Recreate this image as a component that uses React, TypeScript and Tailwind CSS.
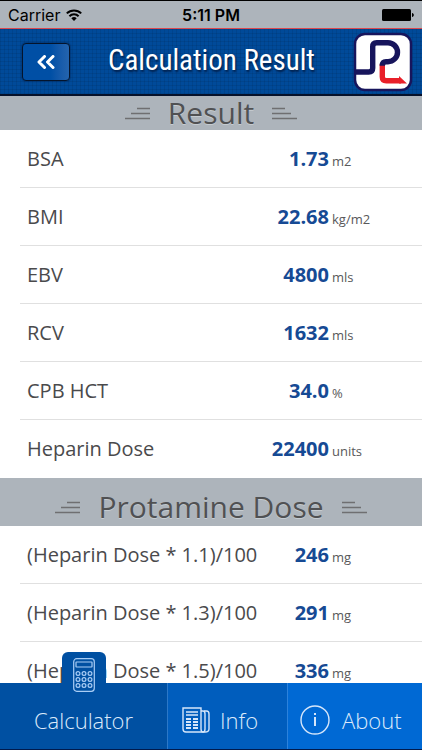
import React, { useState } from 'react';

interface ResultItem {
  label: string;
  value: string;
  unit: string;
}

type TabId = 'calculator' | 'info' | 'about';

const results: ResultItem[] = [
  { label: 'BSA', value: '1.73', unit: 'm2' },
  { label: 'BMI', value: '22.68', unit: 'kg/m2' },
  { label: 'EBV', value: '4800', unit: 'mls' },
  { label: 'RCV', value: '1632', unit: 'mls' },
  { label: 'CPB HCT', value: '34.0', unit: '%' },
  { label: 'Heparin Dose', value: '22400', unit: 'units' },
];

const protamineDoses: ResultItem[] = [
  { label: '(Heparin Dose * 1.1)/100', value: '246', unit: 'mg' },
  { label: '(Heparin Dose * 1.3)/100', value: '291', unit: 'mg' },
  { label: '(Heparin Dose * 1.5)/100', value: '336', unit: 'mg' },
];

const StatusBar = () => (
  <div className="grid grid-cols-3 items-center h-7 px-2 border-t border-black bg-[#adb4bb] text-black text-[16px] leading-6 font-['Inter',sans-serif]">
    <div className="flex items-center gap-1.5">
      <span>Carrier</span>
      <svg viewBox="0 0 16 12" className="w-4 h-3" fill="none" stroke="black" strokeWidth="2">
        <path d="M0.8 4.4a10.2 10.2 0 0 1 14.4 0" />
        <path d="M3.4 7.2a6.5 6.5 0 0 1 9.2 0" />
        <path d="M8 12L5.3 9.3a3.8 3.8 0 0 1 5.4 0z" fill="black" stroke="none" />
      </svg>
    </div>
    <span className="text-center font-semibold whitespace-nowrap">5:11 PM</span>
    <svg viewBox="0 0 32 12" className="w-8 h-3 justify-self-end">
      <rect width="29" height="12" rx="1.5" fill="black" />
      <path d="M30 4c1.2.3 1.8 1 1.8 2s-.6 1.7-1.8 2z" fill="black" />
    </svg>
  </div>
);

const Logo = () => (
  <svg viewBox="0 0 60 60" className="w-[60px] h-[60px]" fill="none">
    <rect x="2" y="2" width="56" height="56" rx="10" fill="white" stroke="#17155c" strokeWidth="2.5" />
    <path d="M29.3 32V44.7q0 4 4 4H48" stroke="#e8202a" strokeWidth="5.4" />
    <path d="M46 44L54 51.4H46z" fill="#e8202a" />
    <path
      d="M2 40H15.7q4 0 4-4V14.7q0-4 4-4H35a9.5 9.5 0 0 1 0 19H33q-3.7 0-3.7 4"
      stroke="#17155c"
      strokeWidth="5.4"
    />
  </svg>
);

const Header = () => (
  <header className="flex items-center justify-between h-[68px] pl-[22px] pr-[9px] border-t border-t-[#d9474f] border-b-2 border-b-[#06122b] bg-[#004a99] bg-[linear-gradient(#00000014_1px,transparent_1px),linear-gradient(90deg,#00000014_1px,transparent_1px)] bg-[size:4px_4px]">
    <button
      type="button"
      aria-label="Back"
      className="flex items-center justify-center w-12 h-[38px] rounded-sm border border-[#04142c] bg-linear-to-r from-[#004fa5] from-60% to-[#2464ae] shadow-[0_0_2px_#001a40]"
    >
      <svg viewBox="0 0 18 14" className="w-[18px] h-[14px]" fill="none" stroke="white" strokeWidth="3" strokeLinecap="round" strokeLinejoin="round">
        <path d="M7.5 1.5L2 7l5.5 5.5M16 1.5L10.5 7l5.5 5.5" />
      </svg>
    </button>
    <h1 className="pb-1 text-white text-[29px] leading-9 whitespace-nowrap font-['Roboto_Condensed','Open_Sans_Condensed','Liberation_Sans',sans-serif] [text-shadow:1px_2px_2px_#00204d]">
      Calculation Result
    </h1>
    <Logo />
  </header>
);

const TitleLines = ({ flipped = false }: { flipped?: boolean }) => (
  <svg viewBox="0 0 25 13" className={`w-[25px] h-[13px] ${flipped ? '-scale-x-100' : ''}`} stroke="#6f6f71" strokeWidth="1.5">
    <path d="M12 1.5H25M6 6.5H25M0 11.5H25" />
  </svg>
);

const SectionTitle = ({ children, className = '' }: { children: string; className?: string }) => (
  <h2 className={`flex items-end justify-center bg-[#adb4bb] text-[#505153] text-[30px] leading-[34px] ${className}`}>
    <span className="flex items-center">
      <TitleLines />
      <span className="px-[18px] whitespace-nowrap [text-shadow:0_1px_0_#c6ccd1]">{children}</span>
      <TitleLines flipped />
    </span>
  </h2>
);

const ResultList = ({ items }: { items: ResultItem[] }) => (
  <dl>
    {items.map((item) => (
      <div
        key={item.label}
        className="flex items-baseline ml-5 pl-[7px] pt-[17px] pb-4 border-b border-[#e0e0e0] last:border-transparent text-[20px] leading-6"
      >
        <dt className="flex-1 text-[#4a4a4c] whitespace-nowrap">{item.label}</dt>
        <dd className="font-bold text-[#164a94]">{item.value}</dd>
        <dd className="w-[93px] pl-[3px] text-[13px] leading-5 text-[#58585a]">{item.unit}</dd>
      </div>
    ))}
  </dl>
);

const CalculatorIcon = () => (
  <svg viewBox="0 0 22 34" className="w-[22px] h-[34px]" fill="none" stroke="#a9cdf5" strokeWidth="1.2">
    <rect x="0.7" y="0.7" width="20.6" height="32.6" rx="3" />
    <rect x="3" y="4" width="16" height="5" rx="0.5" />
    {[15.5, 21.5, 27.5].map((cy) =>
      [5, 11, 17].map((cx) => <circle key={`${cx}-${cy}`} cx={cx} cy={cy} r="1.9" />)
    )}
  </svg>
);

const NewsIcon = () => (
  <svg viewBox="0 0 28 26" className="w-7 h-[26px]" fill="none" stroke="#d5e6fa" strokeWidth="1.4">
    <path d="M19 22V1H1V22q0 3 3 3H23q4 0 4-3V7q0-3-2.5-3H22" />
    <path d="M19 22q0 3 2 3t2-3V7q0-3-2-3h-2" />
    <path d="M4 5H16M4 8H16" />
    <path d="M4 12H9M4 15H9M4 18H9M4 21H9M11 12H16M11 15H16M11 18H16M11 21H16" strokeWidth="1.8" />
  </svg>
);

const InfoCircleIcon = () => (
  <svg viewBox="0 0 30 30" className="w-[30px] h-[30px]" fill="none" stroke="#d5e6fa" strokeWidth="1.4">
    <circle cx="15" cy="15" r="14" />
    <path d="M15 12V21M15 8V10" strokeWidth="2" />
  </svg>
);

const TabBar = ({ active, onChange }: { active: TabId; onChange: (tab: TabId) => void }) => {
  const tabClass = 'flex items-center h-[66px] pt-2 text-[#dceafb] text-[22px] leading-8 font-light';

  return (
    <nav className="grid grid-cols-[167fr_120fr_135fr] border-b border-[#001a4d]">
      <button
        type="button"
        aria-current={active === 'calculator'}
        onClick={() => onChange('calculator')}
        className={`${tabClass} relative justify-center bg-[#0050a2]`}
      >
        <span className="absolute left-1/2 -translate-x-1/2 -top-[31px] flex justify-center w-11 h-10 pt-1.5 rounded-t-md bg-[#0050a2]">
          <CalculatorIcon />
        </span>
        Calculator
      </button>
      <button
        type="button"
        aria-current={active === 'info'}
        onClick={() => onChange('info')}
        className={`${tabClass} gap-2.5 pl-3.5 border-l border-[#2c78c8] bg-[#005dbd]`}
      >
        <NewsIcon />
        Info
      </button>
      <button
        type="button"
        aria-current={active === 'about'}
        onClick={() => onChange('about')}
        className={`${tabClass} gap-3 pl-3 border-l border-[#2c82dc] bg-[#0069d4]`}
      >
        <InfoCircleIcon />
        About
      </button>
    </nav>
  );
};

const App: React.FC = () => {
  const [activeTab, setActiveTab] = useState<TabId>('calculator');

  return (
    <div className="flex flex-col h-screen bg-white font-['Open_Sans',sans-serif]">
      <StatusBar />
      <Header />
      <main className="flex-1 min-h-0 overflow-y-auto [scrollbar-width:none]">
        <SectionTitle>Result</SectionTitle>
        <ResultList items={results} />
        <SectionTitle className="pt-3 pb-0.5">Protamine Dose</SectionTitle>
        <ResultList items={protamineDoses} />
      </main>
      <TabBar active={activeTab} onChange={setActiveTab} />
    </div>
  );
};

export default App;
